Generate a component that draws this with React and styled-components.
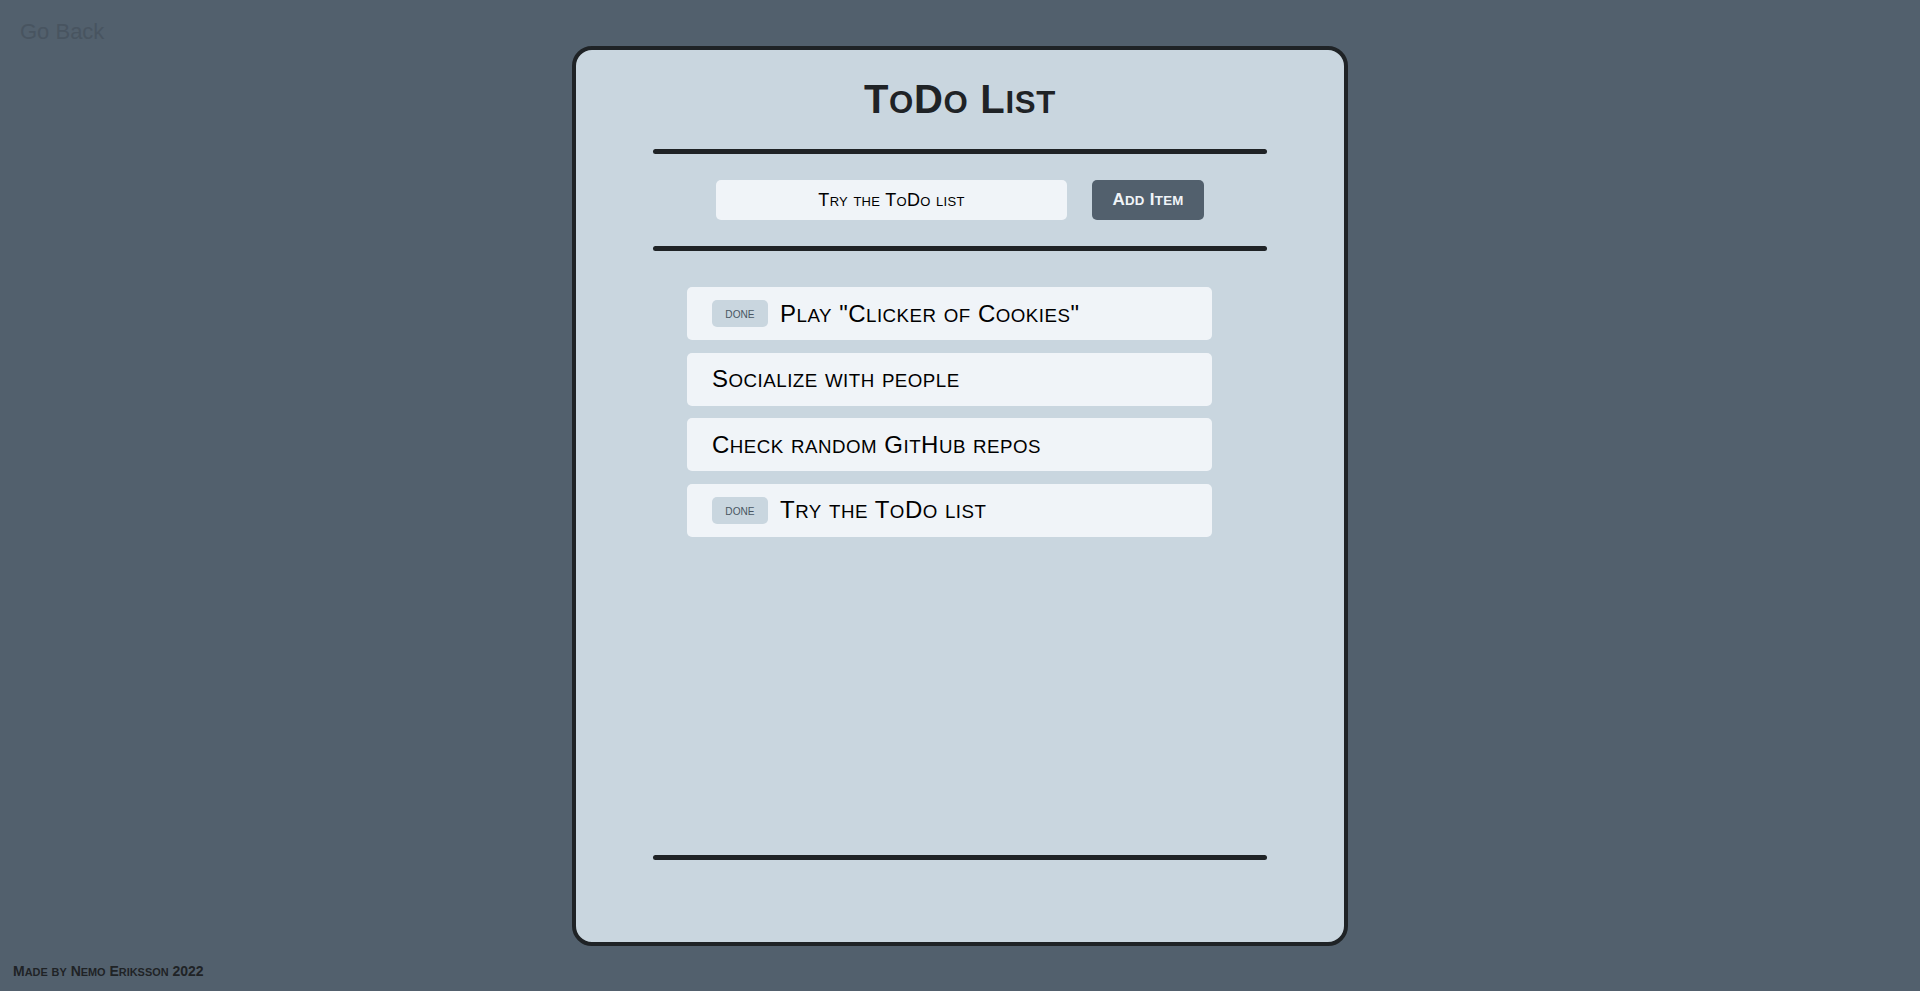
import React from "react";
import styled, { createGlobalStyle } from "styled-components";

const GlobalStyle = createGlobalStyle`
  html, body {
    margin: 0;
    padding: 0;
    background: #52606d;
    font-family: "Liberation Sans", Arial, sans-serif;
  }
`;

const items = [
  { text: 'Play "Clicker of Cookies"', done: true },
  { text: "Socialize with people", done: false },
  { text: "Check random GitHub repos", done: false },
  { text: "Try the ToDo list", done: true },
];

// small caps drawn by hand: lowercase runs become smaller capitals
function SmallCaps({ children }) {
  const parts = String(children).split(/([a-z]+)/);
  return parts.map((part, i) =>
    /^[a-z]+$/.test(part) ? <Small key={i}>{part.toUpperCase()}</Small> : part
  );
}

function App() {
  return (
    <>
      <GlobalStyle />
      <Page>
        <GoBack href="#">Go Back</GoBack>
        <Card>
          <Title>
            <SmallCaps>ToDo List</SmallCaps>
          </Title>
          <Rule />
          <InputRow>
            <TextInput defaultValue="Try the ToDo list" />
            <AddButton>
              <SmallCaps>Add Item</SmallCaps>
            </AddButton>
          </InputRow>
          <Rule $gap={26} />
          <List>
            {items.map((item) => (
              <Item key={item.text}>
                {item.done && (
                  <DoneButton>
                    <SmallCaps>done</SmallCaps>
                  </DoneButton>
                )}
                <ItemText>
                  <SmallCaps>{item.text}</SmallCaps>
                </ItemText>
              </Item>
            ))}
          </List>
          <Rule $bottom />
        </Card>
        <Footer>
          <SmallCaps>Made by Nemo Eriksson 2022</SmallCaps>
        </Footer>
      </Page>
    </>
  );
}

export default App;

const Small = styled.span`
  font-size: 0.78em;
  line-height: 1;
`;

const Page = styled.div`
  height: 100vh;
  display: grid;
  grid-template-columns: 1fr 776px 1fr;
  grid-template-rows: 1fr 45px;
  box-sizing: border-box;
  padding-top: 46px;
`;

const GoBack = styled.a`
  grid-column: 1;
  grid-row: 1;
  align-self: start;
  justify-self: start;
  margin: -27px 0 0 20px;
  font-size: 22px;
  color: #485460;
  text-decoration: none;
`;

const Card = styled.div`
  grid-column: 2;
  grid-row: 1;
  box-sizing: border-box;
  height: 900px;
  background: #c9d6df;
  border: 4px solid #1f2326;
  border-radius: 20px;
  display: flex;
  flex-direction: column;
  align-items: center;
  padding: 25px 0 82px;
`;

const Title = styled.h1`
  margin: 0;
  font-size: 40px;
  line-height: 48px;
  font-weight: bold;
  letter-spacing: 0.7px;
  color: #1f2326;
`;

const Rule = styled.div`
  width: 614px;
  height: 5px;
  border-radius: 3px;
  background: #1f2326;
  margin-top: ${(p) => (p.$bottom ? "auto" : `${p.$gap ?? 26}px`)};
  flex-shrink: 0;
`;

const InputRow = styled.div`
  display: flex;
  gap: 25px;
  margin-top: 26px;
`;

const TextInput = styled.input`
  box-sizing: border-box;
  width: 351px;
  height: 40px;
  border: none;
  border-radius: 5px;
  background: #f0f4f8;
  text-align: center;
  font-family: "Liberation Sans", Arial, sans-serif;
  font-size: 18px;
  font-variant: small-caps;
  letter-spacing: 0.3px;
  color: #000;
  outline: none;
`;

const AddButton = styled.button`
  width: 112px;
  height: 40px;
  border: none;
  border-radius: 5px;
  background: #52606d;
  color: #f0f4f8;
  font-family: "Liberation Sans", Arial, sans-serif;
  font-size: 17px;
  font-weight: bold;
  letter-spacing: 0.3px;
  cursor: pointer;
`;

const List = styled.ul`
  list-style: none;
  margin: 36px 0 0;
  padding: 0 55px 0 34px;
  width: 614px;
  box-sizing: border-box;
  display: flex;
  flex-direction: column;
  gap: 12.5px;
`;

const Item = styled.li`
  box-sizing: border-box;
  height: 53px;
  background: #f0f4f8;
  border-radius: 5px;
  display: flex;
  align-items: center;
  padding-left: 25px;
  gap: 12px;
`;

const DoneButton = styled.button`
  width: 56px;
  height: 27px;
  border: none;
  border-radius: 5px;
  background: #c9d6df;
  color: #4a5763;
  font-family: "Liberation Sans", Arial, sans-serif;
  font-size: 13px;
  padding: 0;
  cursor: pointer;
`;

const ItemText = styled.span`
  font-size: 24px;
  letter-spacing: 0.5px;
  color: #000;
`;

const Footer = styled.footer`
  grid-column: 1 / -1;
  grid-row: 2;
  align-self: center;
  padding: 4px 13px 0;
  font-size: 14px;
  font-weight: bold;
  color: #1f2326;
`;
